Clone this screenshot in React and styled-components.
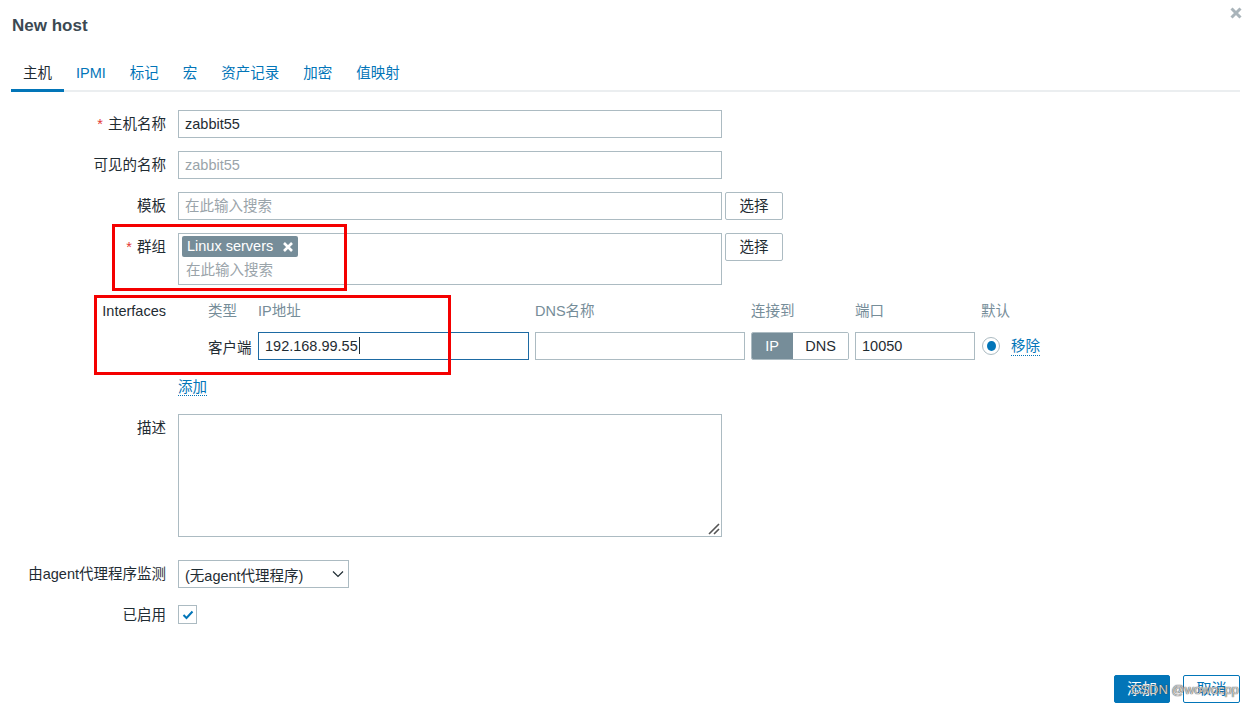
import React from "react";
import styled, { createGlobalStyle } from "styled-components";

const GlobalStyle = createGlobalStyle`
  html, body {
    margin: 0;
    padding: 0;
    background: #ffffff;
  }
  body {
    font-family: "Liberation Sans", Arial, "Noto Sans CJK SC", sans-serif;
    font-size: 14.5px;
    color: #1f2c33;
  }
`;

const Dialog = styled.div`
  position: relative;
  width: 1248px;
  height: 712px;
  box-sizing: border-box;
  padding: 0 8px 0 11px;
  overflow: hidden;
`;

const Header = styled.div`
  display: flex;
  justify-content: space-between;
  align-items: flex-start;
  height: 58px;
`;

const Title = styled.h1`
  margin: 16px 0 0 1px;
  font-size: 17px;
  font-weight: bold;
  color: #3b4952;
  line-height: 20px;
`;

const CloseBtn = styled.div`
  margin-top: 6px;
  margin-right: -2px;
  width: 12px;
  height: 12px;
`;

const Tabs = styled.div`
  display: flex;
  border-bottom: 2px solid #ebeef0;
`;

const Tab = styled.div`
  padding: 5px 12px 5px;
  line-height: 21px;
  color: ${(p) => (p.$active ? "#1f2c33" : "#0275b8")};
  border-bottom: 3px solid ${(p) => (p.$active ? "#0275b8" : "transparent")};
  margin-bottom: -2px;
`;

const Form = styled.div`
  display: grid;
  grid-template-columns: 155px 1fr;
  column-gap: 12px;
  row-gap: 13px;
  padding-top: 18px;
`;

const Label = styled.div`
  text-align: right;
  line-height: ${(p) => p.$lh || 28}px;
  white-space: nowrap;
  margin-top: ${(p) => p.$mt || 0}px;
`;

const Req = styled.span`
  color: #e33734;
  margin-right: 5px;
`;

const Field = styled.div`
  display: flex;
  align-items: flex-start;
  gap: 3px;
  margin-top: ${(p) => p.$mt || 0}px;
`;

const TextBox = styled.div`
  box-sizing: border-box;
  width: ${(p) => p.$w || 544}px;
  height: ${(p) => p.$h || 28}px;
  border: 1px solid ${(p) => (p.$focus ? "#1d6aa3" : "#acbbc2")};
  padding: 0 6px;
  line-height: 26px;
  color: ${(p) => (p.$ph ? "#9aa4aa" : "#1f2c33")};
  background: #fff;
  white-space: nowrap;
`;

const Caret = styled.span`
  display: inline-block;
  width: 1px;
  height: 17px;
  background: #1f2c33;
  vertical-align: middle;
  margin-left: 1px;
  margin-top: -3px;
`;

const Button = styled.div`
  box-sizing: border-box;
  width: 58px;
  height: 28px;
  text-align: center;
  line-height: 26px;
  border: 1px solid #acbbc2;
  border-radius: 2px;
  background: #fff;
  color: #1f2c33;
`;

const MultiBox = styled.div`
  box-sizing: border-box;
  width: 544px;
  height: 52px;
  border: 1px solid #acbbc2;
  padding: 2px 3px;
`;

const Tag = styled.div`
  display: inline-flex;
  align-items: center;
  gap: 9px;
  height: 21px;
  padding: 0 4px 0 5px;
  border-radius: 2px;
  background: #768d99;
  color: #fff;
  line-height: 21px;
`;

const Placeholder = styled.div`
  margin: 3px 0 0 4px;
  line-height: 20px;
  color: #9aa4aa;
`;

const IfaceGrid = styled.div`
  display: grid;
  grid-template-columns: 24px 44px 271px 210px 98px 120px auto;
  column-gap: 6px;
  row-gap: 8px;
  align-items: center;
`;

const ColHead = styled.div`
  line-height: 26px;
  color: #768d99;
  white-space: nowrap;
`;

const Cell = styled.div`
  white-space: nowrap;
`;

const Toggle = styled.div`
  display: flex;
  box-sizing: border-box;
  height: 28px;
  border: 1px solid #acbbc2;
  border-radius: 2px;
  overflow: hidden;
`;

const ToggleItem = styled.div`
  flex: ${(p) => (p.$on ? "0 0 42px" : "1")};
  text-align: center;
  background: ${(p) => (p.$on ? "#768d99" : "#fff")};
  color: ${(p) => (p.$on ? "#fff" : "#1f2c33")};
  margin: ${(p) => (p.$on ? "-1px 0 -1px -1px" : "0")};
  line-height: ${(p) => (p.$on ? 28 : 26)}px;
`;

const DefaultCell = styled.div`
  display: flex;
  align-items: center;
  gap: 11px;
  padding-left: 1px;
`;

const Radio = styled.div`
  box-sizing: border-box;
  width: 18px;
  height: 18px;
  border-radius: 50%;
  border: 1px solid #acbbc2;
  display: flex;
  align-items: center;
  justify-content: center;
  &::after {
    content: "";
    width: 9px;
    height: 10px;
    border-radius: 50%;
    background: #0275b8;
  }
`;

const Link = styled.span`
  color: #0275b8;
  border-bottom: 1px dotted #0275b8;
  line-height: 18px;
`;

const LinkRow = styled.div`
  line-height: 28px;
`;

const TextArea = styled.div`
  position: relative;
  box-sizing: border-box;
  width: 544px;
  height: 123px;
  border: 1px solid #acbbc2;
`;

const Grip = styled.svg`
  position: absolute;
  right: 1px;
  bottom: 1px;
`;

const Select = styled.div`
  box-sizing: border-box;
  width: 171px;
  height: 28px;
  border: 1px solid #acbbc2;
  display: flex;
  align-items: center;
  justify-content: space-between;
  padding: 0 4px 0 6px;
  white-space: nowrap;
`;

const Check = styled.div`
  box-sizing: border-box;
  width: 19px;
  height: 19px;
  border: 1px solid #acbbc2;
  display: flex;
  align-items: center;
  justify-content: center;
  margin-top: 4px;
`;

const Footer = styled.div`
  position: absolute;
  right: 8px;
  top: 675px;
  display: flex;
  gap: 13px;
`;

const FootBtn = styled.div`
  box-sizing: border-box;
  width: ${(p) => (p.$primary ? 56 : 57)}px;
  height: 28px;
  text-align: center;
  line-height: 26px;
  border-radius: 2px;
  border: 1px solid #0275b8;
  background: ${(p) => (p.$primary ? "#0275b8" : "#fff")};
  color: ${(p) => (p.$primary ? "#fff" : "#0275b8")};
  font-size: 15px;
`;

const Watermark = styled.div`
  position: absolute;
  left: 1131px;
  top: 681px;
  font-size: 13px;
  line-height: 18px;
  color: rgba(235, 235, 235, 0.85);
  text-shadow: 0 0 1px rgba(60, 60, 60, 0.9), 0 0 1px rgba(60, 60, 60, 0.9);
  white-space: nowrap;
`;

const Annotation = styled.div`
  position: absolute;
  box-sizing: border-box;
  border: 3px solid #f40000;
  left: ${(p) => p.$x}px;
  top: ${(p) => p.$y}px;
  width: ${(p) => p.$w}px;
  height: ${(p) => p.$h}px;
  pointer-events: none;
`;

const tabs = ["主机", "IPMI", "标记", "宏", "资产记录", "加密", "值映射"];

export default function App() {
  return (
    <>
      <GlobalStyle />
      <Dialog>
        <Header>
          <Title>New host</Title>
          <CloseBtn>
            <svg width="12" height="12" viewBox="0 0 12 12">
              <path d="M1.5 1.5 L10.5 10.5 M10.5 1.5 L1.5 10.5" stroke="#a9b4ba" strokeWidth="3" />
            </svg>
          </CloseBtn>
        </Header>

        <Tabs>
          {tabs.map((t, i) => (
            <Tab key={t} $active={i === 0}>
              {t}
            </Tab>
          ))}
        </Tabs>

        <Form>
          <Label>
            <Req>*</Req>主机名称
          </Label>
          <Field>
            <TextBox>zabbit55</TextBox>
          </Field>

          <Label>可见的名称</Label>
          <Field>
            <TextBox $ph>zabbit55</TextBox>
          </Field>

          <Label>模板</Label>
          <Field>
            <TextBox $ph>在此输入搜索</TextBox>
            <Button>选择</Button>
          </Field>

          <Label>
            <Req>*</Req>群组
          </Label>
          <Field>
            <MultiBox>
              <Tag>
                Linux servers
                <svg width="12" height="12" viewBox="0 0 12 12">
                  <path d="M2 2 L10 10 M10 2 L2 10" stroke="#fff" strokeWidth="2.6" />
                </svg>
              </Tag>
              <Placeholder>在此输入搜索</Placeholder>
            </MultiBox>
            <Button>选择</Button>
          </Field>

          <Label $lh={26}>Interfaces</Label>
          <IfaceGrid>
            <span />
            <ColHead>类型</ColHead>
            <ColHead>IP地址</ColHead>
            <ColHead>DNS名称</ColHead>
            <ColHead>连接到</ColHead>
            <ColHead>端口</ColHead>
            <ColHead>默认</ColHead>

            <span />
            <Cell>客户端</Cell>
            <TextBox $w={271} $focus>
              192.168.99.55
              <Caret />
            </TextBox>
            <TextBox $w={210} />
            <Toggle>
              <ToggleItem $on>IP</ToggleItem>
              <ToggleItem>DNS</ToggleItem>
            </Toggle>
            <TextBox $w={120}>10050</TextBox>
            <DefaultCell>
              <Radio />
              <Link>移除</Link>
            </DefaultCell>
          </IfaceGrid>

          <span />
          <LinkRow>
            <Link>添加</Link>
          </LinkRow>

          <Label>描述</Label>
          <Field>
            <TextArea>
              <Grip width="14" height="14" viewBox="0 0 14 14">
                <path d="M3 13 L13 3 M8 13 L13 8" stroke="#555" strokeWidth="1.6" />
              </Grip>
            </TextArea>
          </Field>

          <Label $mt={10}>由agent代理程序监测</Label>
          <Field $mt={10}>
            <Select>
              <span>(无agent代理程序)</span>
              <svg width="12" height="8" viewBox="0 0 12 8">
                <path d="M1 1.5 L6 6.5 L11 1.5" stroke="#1f2c33" strokeWidth="1.2" fill="none" />
              </svg>
            </Select>
          </Field>

          <Label>已启用</Label>
          <Field>
            <Check>
              <svg width="12" height="10" viewBox="0 0 12 10">
                <path d="M1.5 5 L4.5 8 L10.5 1.5" stroke="#0275b8" strokeWidth="2" fill="none" />
              </svg>
            </Check>
          </Field>
        </Form>

        <Footer>
          <FootBtn $primary>添加</FootBtn>
          <FootBtn>取消</FootBtn>
        </Footer>
        <Watermark>CSDN @wowocpp</Watermark>

        <Annotation $x={112} $y={224} $w={235} $h={67} />
        <Annotation $x={94} $y={295} $w={357} $h={80} />
      </Dialog>
    </>
  );
}
